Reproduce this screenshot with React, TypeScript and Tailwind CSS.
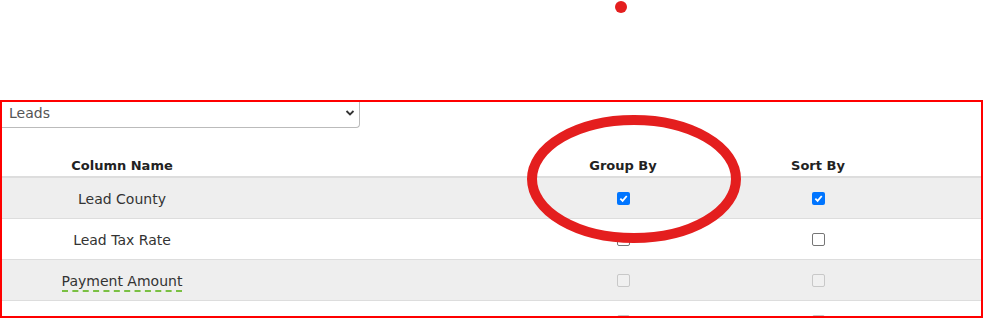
const rows = [
  { name: "Lead County", group: "checked", sort: "checked" },
  { name: "Lead Tax Rate", group: "empty", sort: "empty" },
  { name: "Payment Amount", group: "disabled", sort: "disabled", abbr: true },
  { name: "Coverage Item Type", group: "disabled", sort: "disabled" },
];

function Box({ state }: { state: string }) {
  if (state === "checked") {
    return (
      <span className="flex h-[13px] w-[13px] items-center justify-center rounded-[2px] bg-[#0075ff]">
        <svg width="9" height="9" viewBox="0 0 10 10">
          <path d="M1.5 5.2 L4 7.6 L8.6 2.2" fill="none" stroke="white" strokeWidth="2" />
        </svg>
      </span>
    );
  }
  if (state === "disabled") {
    return <span className="block h-[13px] w-[13px] rounded-[2px] border border-[#c8c8c8] bg-[#f0f0f0]" />;
  }
  return <span className="block h-[13px] w-[13px] rounded-[2px] border border-[#767676] bg-white" />;
}

export default function App() {
  return (
    <div className="relative h-[319px] w-[984px] bg-white font-['DejaVu_Sans',sans-serif] text-[#333]">
      <div className="h-[100px]" />
      <span className="absolute left-[615px] top-[1px] h-[12px] w-[12px] rounded-full bg-[#e41e1e]" />

      <div className="h-[218px] w-[983px] overflow-hidden border-2 border-[#ff0000]">
        <div className="flex h-[26px] w-[358px] items-center justify-between rounded-br-[4px] border-b border-r border-[#bbb] pl-[7px] pr-[4px] pb-[3px] text-[14px] text-[#555]">
          <span>Leads</span>
          <svg width="10" height="8" viewBox="0 0 10 8">
            <path d="M1.5 2 L5 5.5 L8.5 2" fill="none" stroke="#333" strokeWidth="1.8" />
          </svg>
        </div>

        <div className="flex h-[50px] items-end border-b-2 border-[#ddd] pb-[1px] text-[13px] font-semibold text-[#222]">
          <div className="w-[240px] text-center">Column Name</div>
          <div className="w-[283px]" />
          <div className="w-[196px] text-center">Group By</div>
          <div className="w-[194px] text-center">Sort By</div>
        </div>

        {rows.map((r, i) => (
          <div
            key={r.name}
            className={
              "flex h-[41px] items-center border-b border-[#ddd] text-[14px] " +
              (i % 2 === 0 ? "bg-[#eeeeee]" : "bg-white")
            }
          >
            <div className="w-[240px] pt-[2px] text-center">
              {r.abbr ? (
                <span className="border-b-2 border-dashed border-[#7ac043] pb-[1px]">{r.name}</span>
              ) : (
                r.name
              )}
            </div>
            <div className="w-[283px]" />
            <div className="flex w-[196px] justify-center">
              <Box state={r.group} />
            </div>
            <div className="flex w-[194px] justify-center">
              <Box state={r.sort} />
            </div>
          </div>
        ))}
      </div>

      <svg className="absolute left-[524px] top-[112px]" width="222" height="134" viewBox="0 0 222 134">
        <ellipse cx="110" cy="67" rx="102" ry="59" fill="none" stroke="#e41e1e" strokeWidth="10" />
      </svg>
    </div>
  );
}
